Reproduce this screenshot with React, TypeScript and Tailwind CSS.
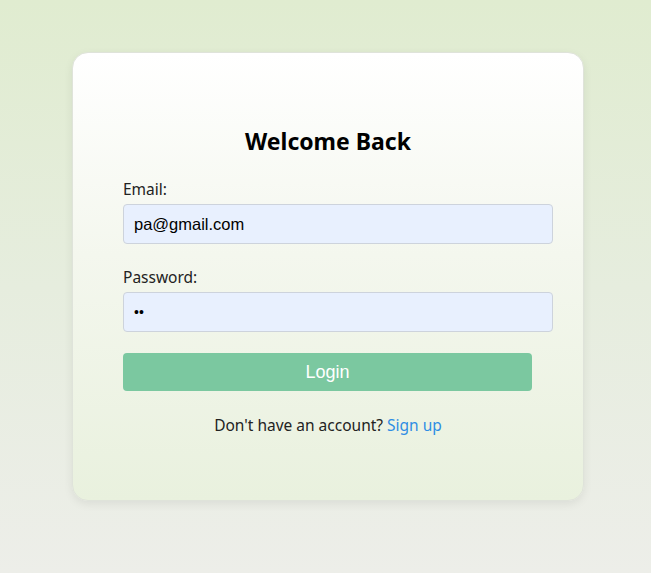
export default function App() {
  return (
    <div
      className="min-h-screen w-full bg-[linear-gradient(to_bottom,#e0ecd0_0%,#e6edde_50%,#edeee9_100%)] pt-[52px] pb-[73px]"
      style={{ fontFamily: '"Noto Sans", "Open Sans", sans-serif' }}
    >
      <div className="ml-[72px] w-[512px] rounded-2xl border border-[#dfe3da] bg-[linear-gradient(to_bottom,#ffffff_0%,#f4f7ee_45%,#e9f1de_100%)] px-[50px] pt-[72px] pb-[63px] shadow-[0_3px_10px_rgba(0,0,0,0.07)]">
        <h2 className="text-center text-[23px] font-bold leading-[32px] text-black">
          Welcome Back
        </h2>
        <form className="mt-[20px] flex flex-col" onSubmit={(e) => e.preventDefault()}>
          <label className="mb-[3px] text-[15.5px] leading-[24px] text-[#222]">Email:</label>
          <input
            type="email"
            defaultValue="pa@gmail.com"
            className="h-[40px] w-[430px] rounded border border-[#cdd3dc] bg-[#e8f0fe] px-[10px] text-[16.5px] text-black outline-none"
            style={{ fontFamily: '"Liberation Sans", Arial, sans-serif' }}
          />
          <label className="mt-[21px] mb-[3px] text-[15.5px] leading-[24px] text-[#222]">Password:</label>
          <input
            type="password"
            defaultValue="ab"
            className="h-[40px] w-[430px] rounded border border-[#cdd3dc] bg-[#e8f0fe] px-[10px] text-[14px] text-black outline-none"
            style={{ fontFamily: '"Liberation Sans", Arial, sans-serif' }}
          />
          <button
            type="submit"
            className="mt-[21px] h-[38px] w-[409px] rounded bg-[#7bc8a0] text-[18px] text-white"
            style={{ fontFamily: '"Liberation Sans", Arial, sans-serif' }}
          >
            Login
          </button>
        </form>
        <p className="mt-[22px] text-center text-[15.5px] leading-[24px] text-[#222]">
          Don't have an account?{" "}
          <a href="#" className="text-[#2f8de4]">
            Sign up
          </a>
        </p>
      </div>
    </div>
  );
}
